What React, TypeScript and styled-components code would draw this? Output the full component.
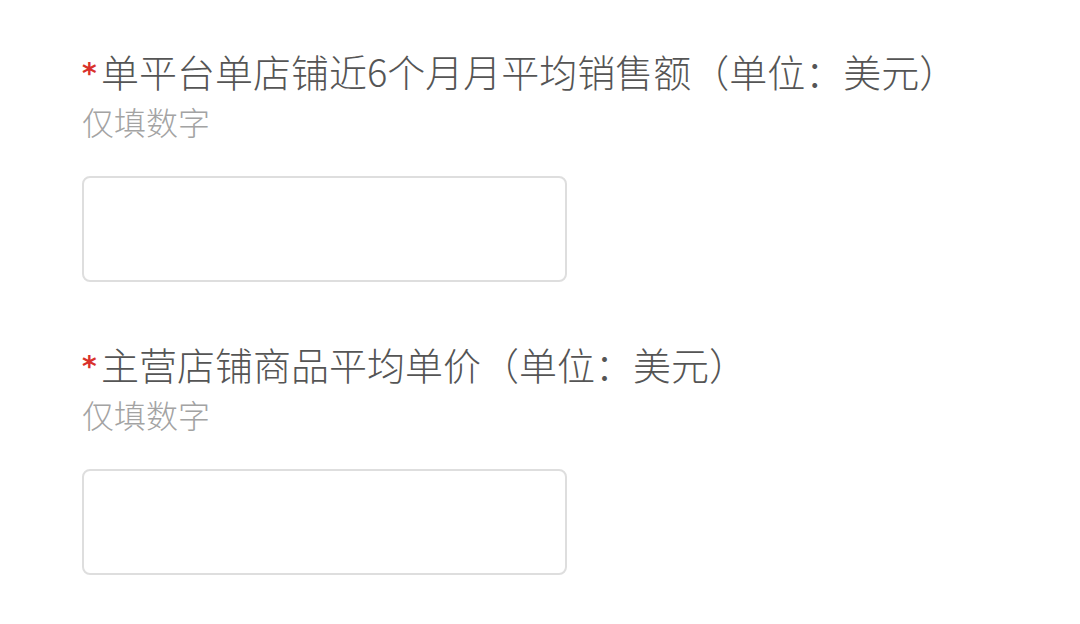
import React from 'react';
import styled, { createGlobalStyle } from 'styled-components';

const GlobalStyle = createGlobalStyle`
  html, body {
    margin: 0;
    padding: 0;
    background: #ffffff;
  }
  body {
    font-family: "Noto Sans CJK SC", "Noto Sans", sans-serif;
  }
`;

const Page = styled.div`
  width: 1080px;
  height: 624px;
  box-sizing: border-box;
  padding: 47px 0 0 82px;
  background: #ffffff;
  overflow: hidden;
`;

const Field = styled.div`
  display: flex;
  flex-direction: column;
  margin-bottom: 58px;
`;

const Label = styled.div`
  display: flex;
  align-items: flex-start;
  height: 48px;
  font-size: 38px;
  line-height: 48px;
  color: #555555;
  font-weight: 300;
  white-space: nowrap;
`;

const Required = styled.span`
  color: #d9312b;
  font-family: "DejaVu Sans", sans-serif;
  font-size: 28px;
  font-weight: 700;
  line-height: 48px;
  width: 19px;
  position: relative;
  top: 3px;
`;

const Hint = styled.div`
  margin-top: 6px;
  font-size: 32px;
  line-height: 40px;
  color: #a3a3a3;
  font-weight: 300;
`;

const Input = styled.input`
  margin-top: 35px;
  width: 485px;
  height: 106px;
  box-sizing: border-box;
  border: 2px solid #dedede;
  border-radius: 8px;
  background: #ffffff;
  outline: none;
  padding: 0 20px;
  font-size: 32px;
  font-family: inherit;
`;

const fields = [
  { label: '单平台单店铺近6个月月平均销售额（单位：美元）', hint: '仅填数字' },
  { label: '主营店铺商品平均单价（单位：美元）', hint: '仅填数字' },
];

export default function App() {
  return (
    <>
      <GlobalStyle />
      <Page>
        {fields.map((f) => (
          <Field key={f.label}>
            <Label>
              <Required>*</Required>
              {f.label}
            </Label>
            <Hint>{f.hint}</Hint>
            <Input type="text" inputMode="numeric" />
          </Field>
        ))}
      </Page>
    </>
  );
}
